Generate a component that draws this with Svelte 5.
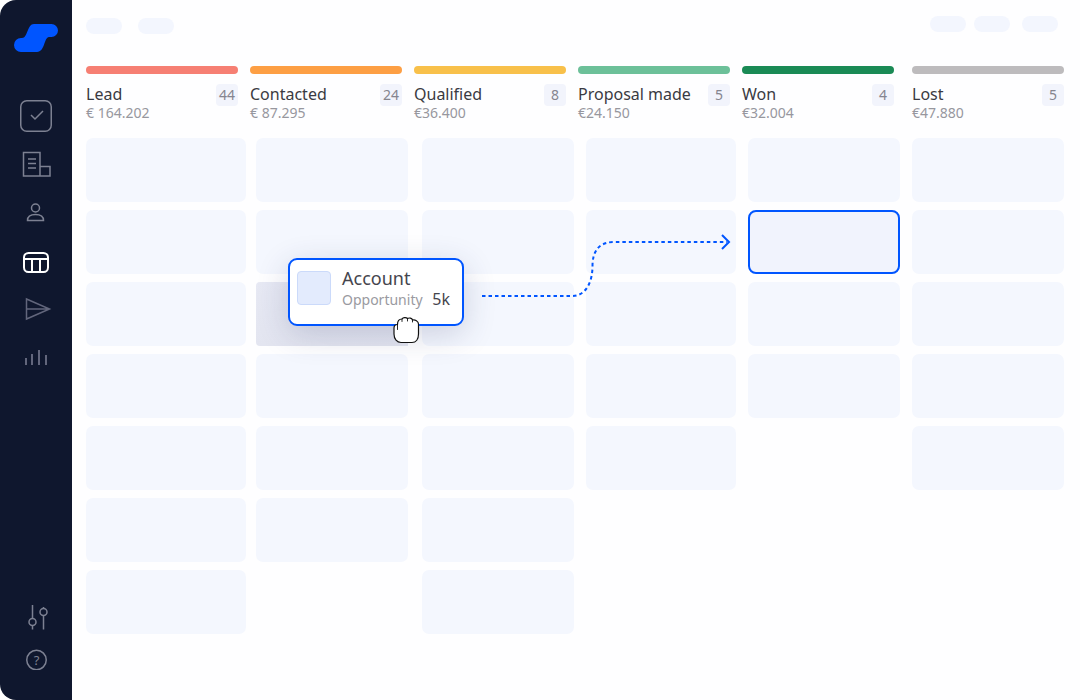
<script>
    const stages = [
        { name: "Lead", total: "€ 164.202", count: 44, color: "#f67f73" },
        { name: "Contacted", total: "€ 87.295", count: 24, color: "#fd9f44" },
        { name: "Qualified", total: "€36.400", count: 8, color: "#f8c04a" },
        { name: "Proposal made", total: "€24.150", count: 5, color: "#6cc099" },
        { name: "Won", total: "€32.004", count: 4, color: "#1a8a55" },
        { name: "Lost", total: "€47.880", count: 5, color: "#bdbbbd" },
    ];
    const rows = [7, 6, 7, 5, 4, 5];
</script>

<div class="app">
    <nav class="sidebar">
        <svg class="logo" width="44" height="28" viewBox="14 24 44 28">
            <path fill="#0055ff" d="M34 24H51.5a6.5 6.5 0 0 1 0 13H49C44 37 45 52 37 52H21a7 7 0 0 1 0-14h1C28 38 27 24 34 24Z" />
        </svg>
        <svg class="nav-icons" width="72" height="290" viewBox="0 90 72 290" fill="none" stroke-width="1.5">
            <g stroke="#7d8192">
                <rect x="20.75" y="100.75" width="30.5" height="30.5" rx="6" />
                <path d="M31 115l4 4 8-8" />
                <path d="M23.5 176V152.5h16.5V176zM40 166.5h10V176H40zM28 159h8M28 163.500h8M28 168h8" />
                <circle cx="35.500" cy="208" r="4" />
                <path d="M27.500 220.500c0-4 3.500-6 8-6s8 2 8 6z" />
            </g>
            <g stroke="#fff" stroke-width="2">
                <rect x="24" y="253" width="24" height="19" rx="4.500" />
                <path d="M24 259h24M32 259v13M40 259v13" />
            </g>
            <g stroke="#62667c">
                <path d="M26.500 299l23 10-23 10zM26.500 309h23" />
            </g>
            <g stroke="#62667c" stroke-width="2">
                <path d="M26 358v7M32 354v11M39 350v15M46 355v10" />
            </g>
        </svg>
        <div class="spacer"></div>
        <svg class="nav-bottom" width="72" height="70" viewBox="0 600 72 70" fill="none" stroke="#7d8192" stroke-width="1.500">
            <path d="M32.500 605v13.500M32.500 625.500v4M43.500 607v1.500M43.500 615.500v14" />
            <circle cx="32.500" cy="622" r="3.500" />
            <circle cx="43.500" cy="612" r="3.500" />
            <circle cx="36.500" cy="660" r="9.750" />
            <text x="36.500" y="664.500" text-anchor="middle" class="help" stroke="none" fill="#7d8192">?</text>
        </svg>
    </nav>

    <main class="main">
        <header class="topbar">
            <div class="pills">
                <span class="pill"></span>
                <span class="pill"></span>
            </div>
            <div class="pills right">
                <span class="pill"></span>
                <span class="pill"></span>
                <span class="pill"></span>
            </div>
        </header>

        <div class="heads">
            {#each stages as s}
                <div class="head">
                    <div class="bar" style="background: {s.color}"></div>
                    <div class="head-row">
                        <div>
                            <div class="name">{s.name}</div>
                            <div class="total">{s.total}</div>
                        </div>
                        <span class="badge">{s.count}</span>
                    </div>
                </div>
            {/each}
        </div>

        <div class="board">
            {#each rows as n, c}
                <div class="col">
                    {#each Array(n) as _, r}
                        <div class="card" class:placeholder={c === 1 && r === 2} class:target={c === 4 && r === 1}></div>
                    {/each}
                </div>
            {/each}
        </div>
    </main>

    <svg class="arrow" width="260" height="70" viewBox="480 232 260 70" fill="none" stroke="#0055ff" stroke-width="2">
        <path stroke-dasharray="3.500 3" d="M482 296H572C586 296 592.500 282 592.500 266C592.500 250 600 242 614 242H727" />
        <path d="M722 235l7 7-7 7" />
    </svg>

    <div class="drag">
        <div class="thumb"></div>
        <div class="drag-text">
            <div class="drag-title">Account</div>
            <div class="drag-sub">
                <span>Opportunity</span>
                <span class="amount">5k</span>
            </div>
        </div>
    </div>

    <svg class="hand" width="28" height="28" viewBox="0 0 28 28" fill="#fff" stroke="#111" stroke-width="1.200" stroke-linejoin="round" stroke-linecap="round">
        <path d="M2 12C2 9.500 3.500 8.500 5.500 8.500C5.500 5 7.500 3 10 3C11 1.500 14 1 15.500 2.500C17 1.500 20 2 20.500 4C23 3.500 26.500 5 26.500 8V18C26.500 23 24 26.500 20 26.500H9C5 26.500 2 23 2 18Z" />
        <path d="M5.500 8.500v5M10 3v2.500M15.500 2.500v2.500M20.500 4v2" stroke-width="0.900" />
    </svg>
</div>

<style>
    :global(body) {
        background: #fff;
    }

    .app {
        position: relative;
        display: flex;
        width: 1080px;
        height: 700px;
        overflow: hidden;
        font-family: "Noto Sans", sans-serif;
        background: #fff;
    }

    .sidebar {
        display: flex;
        flex-direction: column;
        flex: none;
        width: 72px;
        height: 700px;
        background: #0f172e;
        border-radius: 16px 0 0 16px;
    }
    .logo {
        margin: 24px 0 0 14px;
        flex: none;
    }
    .nav-icons {
        margin-top: 38px;
        flex: none;
    }
    .spacer {
        flex: 1;
    }
    .nav-bottom {
        margin-bottom: 30px;
        flex: none;
    }
    .help {
        font-family: "Noto Sans", sans-serif;
        font-size: 13px;
    }

    .main {
        flex: 1;
        padding: 16px 16px 0 14px;
        background: #fefeff;
    }

    .topbar {
        display: flex;
        justify-content: space-between;
        height: 18px;
    }
    .pills {
        display: flex;
        gap: 16px;
        padding-top: 2px;
    }
    .pills.right {
        gap: 8px;
        padding-top: 0;
        padding-right: 6px;
    }
    .pills.right .pill:last-child {
        margin-left: 4px;
        margin-right: 12px;
    }
    .pill {
        width: 36px;
        height: 16px;
        border-radius: 8px;
        background: #f3f6fe;
    }

    .heads {
        display: flex;
        gap: 12px;
        margin-top: 32px;
    }
    .head {
        width: 152px;
    }
    .head:last-child {
        margin-left: 6px;
    }
    .bar {
        height: 8px;
        border-radius: 4px;
    }
    .head-row {
        display: flex;
        justify-content: space-between;
        align-items: flex-start;
        margin-top: 9px;
    }
    .name {
        font-size: 16px;
        line-height: 22px;
        color: #3a3a42;
    }
    .total {
        font-size: 14px;
        line-height: 16px;
        color: #97979e;
    }
    .badge {
        width: 22px;
        height: 22px;
        margin-top: 1px;
        border-radius: 4px;
        background: #f2f4fc;
        font-size: 14px;
        line-height: 21px;
        text-align: center;
        color: #85858f;
    }

    .board {
        display: flex;
        margin-top: 17px;
    }
    .col {
        display: flex;
        flex-direction: column;
        gap: 8px;
        width: 152px;
        margin-right: 12px;
    }
    .col:nth-child(1) {
        width: 160px;
        margin-right: 10px;
    }
    .col:nth-child(2) {
        margin-right: 14px;
    }
    .col:nth-child(4) {
        width: 150px;
    }
    .card {
        height: 64px;
        border-radius: 7px;
        background: #f4f7fe;
    }
    .card.placeholder {
        border-radius: 4px 0 0 4px;
        background: linear-gradient(#e7e9f4, #e3e5f0);
    }
    .card.target {
        box-sizing: border-box;
        border: 2px solid #0055ff;
        border-radius: 8px;
        background: #f1f3fd;
    }

    .arrow {
        position: absolute;
        left: 480px;
        top: 232px;
    }

    .drag {
        position: absolute;
        left: 288px;
        top: 258px;
        box-sizing: border-box;
        display: flex;
        align-items: center;
        gap: 11px;
        width: 176px;
        height: 68px;
        padding: 0 12px 0 7px;
        border: 2px solid #0055ff;
        border-radius: 9px;
        background: #fff;
        box-shadow: 0 8px 32px rgba(40, 50, 100, 0.2);
    }
    .thumb {
        flex: none;
        box-sizing: border-box;
        width: 34px;
        height: 34px;
        margin-bottom: 8px;
        border: 1px solid #cbdafa;
        border-radius: 4px;
        background: #e3ebfd;
    }
    .drag-text {
        flex: 1;
        padding-bottom: 8px;
    }
    .drag-title {
        font-size: 18px;
        line-height: 24px;
        color: #45454d;
    }
    .drag-sub {
        display: flex;
        justify-content: space-between;
        align-items: baseline;
        margin-top: -1px;
        font-size: 14px;
        line-height: 20px;
        color: #9a9aa1;
    }
    .amount {
        font-size: 16px;
        color: #45454d;
    }

    .hand {
        position: absolute;
        left: 392px;
        top: 316px;
    }
</style>
